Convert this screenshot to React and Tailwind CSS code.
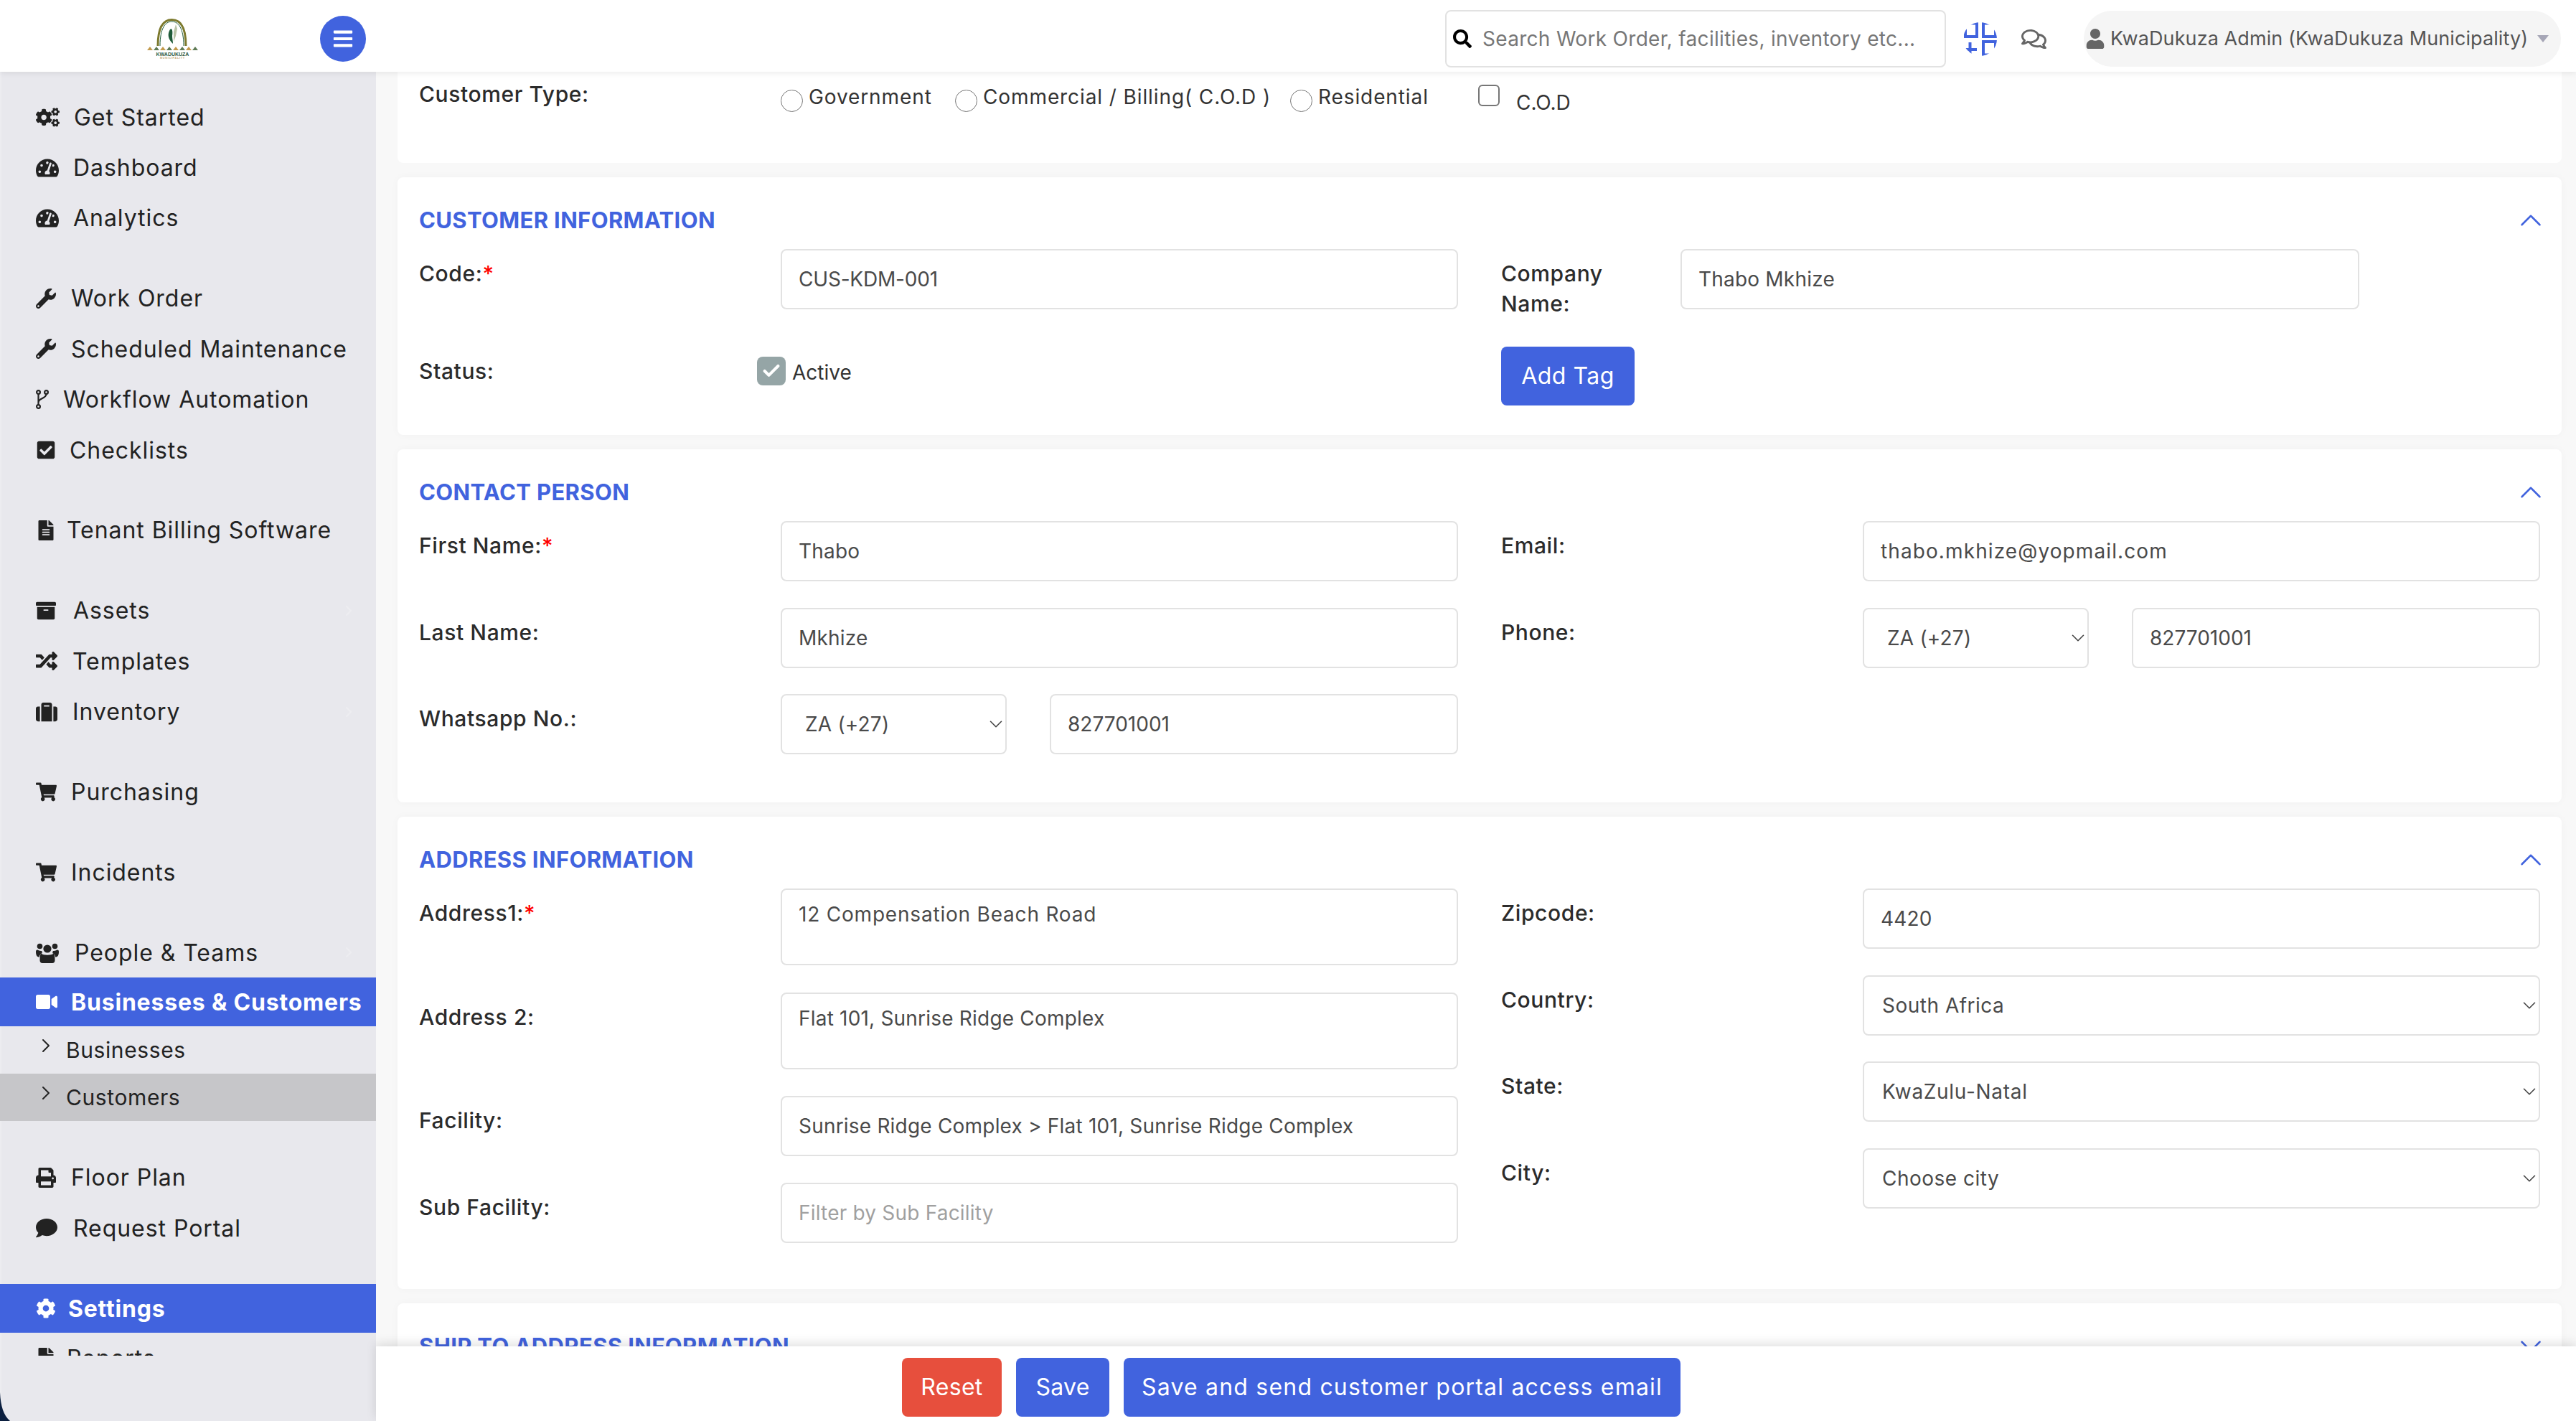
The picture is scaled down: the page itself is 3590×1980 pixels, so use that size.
import React from 'react';
import { Check, ChevronDown, ChevronRight, ChevronUp } from 'lucide-react';
import {
  FaArchive, FaBars, FaCheckSquare, FaCog, FaCogs, FaComment, FaFileAlt, FaPrint, FaRandom,
  FaRegComments, FaSearch, FaShoppingCart, FaSuitcase, FaTachometerAlt, FaUser, FaVideo, FaWrench,
} from 'react-icons/fa';

const Logo = () => (
  <svg viewBox="0 0 73 56" className="w-[73px] h-[56px]">
    <path d="M16 38 C16 12 24 1.5 35.5 1.5 C47 1.5 55 12 55 38" fill="none" stroke="#7d7a2e" strokeWidth="3" />
    <path d="M19 38 C19 14 26 4 35.5 4 C45 4 52 14 52 38" fill="none" stroke="#1f5c3a" strokeWidth="1" />
    <path d="M37 35 C30 28 29 22 33 15 C36 12 37 18 36 24 C36 28 37 31 37 35Z" fill="#1f5c3a" />
    <path d="M38 32 L38 18 L41 8 L43 14 L41 24Z" fill="#b9c4a8" />
    {[1, 10, 19, 28, 37, 46, 55, 64].map((x, i) => (
      <polygon key={x} points={`${x},44 ${x + 4},39 ${x + 8},44`} fill={i % 2 ? '#5d7a55' : '#c29a4c'} />
    ))}
    <text x="36.5" y="52" textAnchor="middle" fontFamily="Liberation Sans, sans-serif" fontWeight="700" fontSize="7" fill="#2d5a44">KWADUKUZA</text>
    <text x="36.5" y="56" textAnchor="middle" fontFamily="Liberation Sans, sans-serif" fontWeight="700" fontSize="3.6" letterSpacing="0.8" fill="#c2a878">MUNICIPALITY</text>
  </svg>
);

const GroupIcon = () => (
  <svg viewBox="0 0 47 47" className="w-[47px] h-[47px]">
    <clipPath id="grp"><circle cx="23.5" cy="23.5" r="23.5" /></clipPath>
    <g clipPath="url(#grp)" fill="none" stroke="#4163de" strokeWidth="4">
      <rect x="3" y="1.5" width="16" height="18.5" />
      <rect x="28" y="1.5" width="17" height="18.5" />
      <rect x="28" y="27" width="17" height="18.5" />
      <path d="M0 38H19M9.5 28V47" />
    </g>
  </svg>
);

// fork icon, the package's one has solid dots
const ForkIcon = () => (
  <svg viewBox="0 0 18 27" className="w-[18px] h-[27px]" fill="none" stroke="currentColor" strokeWidth="2.2">
    <circle cx="3.5" cy="3.5" r="2.4" />
    <circle cx="14.5" cy="3.5" r="2.4" />
    <circle cx="3.5" cy="23.5" r="2.4" />
    <path d="M3.5 6V21M14.5 6C14.5 13 3.5 11 3.5 18" />
  </svg>
);

const UsersIcon = () => (
  <svg viewBox="0 0 32 29" className="w-[32px] h-[29px]" fill="currentColor">
    <circle cx="16" cy="9" r="5.6" />
    <circle cx="5.5" cy="5.5" r="3.8" />
    <circle cx="26.5" cy="5.5" r="3.8" />
    <path d="M7 15.5C11 18.5 21 18.5 25 15.5C26 17 26.5 20 26.5 25C26.5 27.5 25 29 23 29H9C7 29 5.500 27.500 5.500 25C5.500 20 6 17 7 15.500Z" />
    <path d="M0 13C0 10.500 2 10.500 2.500 10.500C4 12 7 12 8.500 12C8 13 8.500 14 9 15C7 15.500 5 17.500 4.800 20.500C1.500 20.500 0 18 0 13Z" />
    <path d="M32 13C32 10.500 30 10.500 29.500 10.500C28 12 25 12 23.500 12C24 13 23.500 14 23 15C25 15.500 27 17.500 27.200 20.500C30.500 20.500 32 18 32 13Z" />
  </svg>
);

const Row = ({ icon: Icon, label, size = 32, w, active, arrow }) => (
  <div className={`flex items-center pl-[50px] ${active ? 'h-[68px] bg-[#4163de] text-white font-bold tracking-[0.8px]' : 'h-[70.4px] text-[#222]'}`}>
    <span className={`flex items-center shrink-0 ${w}`}>
      <Icon size={size} />
    </span>
    <span className="flex-1 whitespace-nowrap pt-[1px]">{label}</span>
    {arrow && <ChevronRight size={24} className="text-[#ededf1] mr-[26px]" />}
  </div>
);

const SubRow = ({ label, active }) => (
  <div className={`flex items-center h-[66px] pl-[48px] text-[30px] tracking-[0.6px] text-[#222] ${active ? 'bg-[#c6c6c9]' : ''}`}>
    <ChevronRight size={32} strokeWidth={1.5} className="-mt-[12px] mr-[12px] shrink-0" />
    {label}
  </div>
);

const Sidebar = () => (
  <aside className="w-[524px] shrink-0 bg-[#e8e8ed] border-l-2 border-[#ececf0]">
    <nav className="h-[1789px] overflow-hidden pt-[28px] -ml-[2px] text-[32px] tracking-[0.95px]">
      <Row icon={FaCogs} label="Get Started" size={33} w="w-[53px]" />
      <Row icon={FaTachometerAlt} label="Dashboard" w="w-[52px]" />
      <Row icon={FaTachometerAlt} label="Analytics" w="w-[52px]" />

      <div className="mt-[41.5px]">
        <Row icon={FaWrench} label="Work Order" size={28} w="w-[49px]" />
        <Row icon={FaWrench} label="Scheduled Maintenance" size={28} w="w-[49px]" />
        <Row icon={ForkIcon} label="Workflow Automation" w="w-[38px]" />
        <Row icon={FaCheckSquare} label="Checklists" size={28} w="w-[47px]" />
      </div>

      <div className="mt-[41.5px]">
        <Row icon={FaFileAlt} label="Tenant Billing Software" size={28} w="w-[43px]" />
      </div>

      <div className="mt-[41.5px]">
        <Row icon={FaArchive} label="Assets" size={28} w="w-[52px]" arrow />
        <Row icon={FaRandom} label="Templates" size={30} w="w-[51px]" />
        <Row icon={FaSuitcase} label="Inventory" size={30} w="w-[51px]" arrow />
      </div>

      <div className="mt-[41.5px]">
        <Row icon={FaShoppingCart} label="Purchasing" size={29} w="w-[49px]" />
      </div>

      <div className="mt-[41.5px]">
        <Row icon={FaShoppingCart} label="Incidents" size={29} w="w-[49px]" />
      </div>

      <div className="mt-[41.5px]">
        <Row icon={UsersIcon} label="People & Teams" w="w-[54px]" arrow />
        <Row icon={FaVideo} label="Businesses & Customers" size={30} w="w-[49px]" active />
        <SubRow label="Businesses" />
        <SubRow label="Customers" active />
      </div>

      <div className="mt-[43px]">
        <Row icon={FaPrint} label="Floor Plan" size={28} w="w-[49px]" />
        <Row icon={FaComment} label="Request Portal" size={30} w="w-[52px]" />
      </div>

      <div className="mt-[43px]">
        <Row icon={FaCog} label="Settings" size={28} w="w-[45px]" active />
        <Row icon={FaFileAlt} label="Reports" size={28} w="w-[43px]" />
      </div>
    </nav>
  </aside>
);

const Label = ({ text, required, className = 'w-[504px]' }) => (
  <label className={`shrink-0 pt-[13px] text-[30px] leading-[42px] font-medium text-[#2b2b2b] tracking-[0.6px] ${className}`}>
    {text}
    {required && <span className="text-[#ff0000]">*</span>}
  </label>
);

const inputClass =
  'w-full h-[84px] px-[23px] border-2 border-[#e2e2e2] rounded-lg bg-white text-[28px] text-[#4a4a4a] tracking-[0.2px] placeholder:text-[#a0a0a0] outline-none';

const Text = ({ value, placeholder, className = '' }) => (
  <input readOnly defaultValue={value} placeholder={placeholder} className={`${inputClass} ${className}`} />
);

const Select = ({ value, wide, className = '' }) => (
  <div className="relative w-full">
    <select defaultValue={value} className={`${inputClass} appearance-none ${wide ? 'pl-[25px]' : 'pl-[32px]'} ${className}`}>
      <option>{value}</option>
    </select>
    <ChevronDown size={30} strokeWidth={1.3} className="absolute right-0 top-[27px] text-[#444]" />
  </div>
);

const Field = ({ label, required, mb = 'mb-[36.5px]', children }) => (
  <div className={`flex ${mb}`}>
    <Label text={label} required={required} />
    <div className="flex-1 min-w-0">{children}</div>
  </div>
);

const Phone = ({ number }) => (
  <div className="flex gap-[60px]">
    <div className="w-[315px] shrink-0"><Select value="ZA (+27)" /></div>
    <Text value={number} className="!tracking-[0px]" />
  </div>
);

const Card = ({ title, open = true, className = '', children }) => (
  <section className={`bg-white rounded-lg shadow-[0_0_12px_rgba(0,0,0,0.03)] px-[30px] ${className}`}>
    <div className="flex items-center justify-between h-[42px] mt-[39px] mb-[19px]">
      <h2 className="text-[31px] font-bold text-[#4163de] uppercase tracking-[0.35px]">{title}</h2>
      {open
        ? <ChevronUp size={50} strokeWidth={1.2} className="text-[#4163de] -mr-[12px]" />
        : <ChevronDown size={50} strokeWidth={1.2} className="text-[#4163de] -mr-[12px]" />}
    </div>
    {children}
  </section>
);

const Radio = ({ label, className = '' }) => (
  <span className={`flex items-center ${className}`}>
    <input type="radio" name="customerType" className="w-[31px] h-[31px] m-0 mt-[10px] shrink-0" />
    <span className="ml-[8px] text-[28px] text-[#333] tracking-[0.9px] whitespace-nowrap">{label}</span>
  </span>
);

const App = () => (
  <div className="relative w-[3590px] h-[1980px] flex flex-col overflow-hidden bg-white font-['Inter',sans-serif]">
    <header className="relative z-20 h-[100px] shrink-0 flex items-center bg-white shadow-[0_2px_8px_rgba(0,0,0,0.08)] pr-[21px] pt-[8px]">
      <div className="ml-[204px]"><Logo /></div>
      <button className="ml-[169px] w-[64px] h-[64px] rounded-full bg-[#4163de] text-white flex items-center justify-center">
        <FaBars size={30} />
      </button>

      <div className="ml-auto w-[698px] h-[80px] flex items-center border-2 border-[#e2e2e2] rounded-lg pl-[9px]">
        <FaSearch size={26} className="text-black shrink-0" />
        <span className="ml-[15px] text-[28px] text-[#777] tracking-[0.3px] whitespace-nowrap">Search Work Order, facilities, inventory etc...</span>
      </div>
      <div className="ml-[24px]"><GroupIcon /></div>
      <FaRegComments size={35} className="ml-[34px] text-[#666]" />
      <div className="ml-[52px] w-[665px] h-[78px] rounded-full bg-[#f5f5f5] flex items-center pl-[2px]">
        <FaUser size={28} className="text-[#666] shrink-0" />
        <span className="ml-[7px] text-[27px] text-[#555] tracking-[0.1px] whitespace-nowrap">KwaDukuza Admin (KwaDukuza Municipality)</span>
        <svg viewBox="0 0 16 10" className="w-[16px] h-[10px] ml-[13px]"><polygon points="0,0 16,0 8,10" fill="#a6a6b6" /></svg>
      </div>
    </header>

    <div className="flex flex-1 min-h-0">
      <Sidebar />

      <main className="flex-1 min-w-0 flex flex-col">
        <div className="flex-1 min-h-0 overflow-hidden bg-[#f8f8f8] pl-[30px] pr-[20px] flex flex-col gap-[20px]">
          <section className="bg-white rounded-b-lg shrink-0 h-[127px] px-[30px] flex">
            <Label text="Customer Type:" className="w-[504px] !pt-[10px]" />
            <div className="flex items-start pt-[14px]">
              <Radio label="Government" className="w-[243px]" />
              <Radio label="Commercial / Billing( C.O.D )" className="w-[467px]" />
              <Radio label="Residential" className="w-[262px]" />
              <input type="checkbox" className="appearance-none w-[30px] h-[30px] m-0 mt-[4px] shrink-0 border-2 border-[#767676] rounded-[6px] bg-white" />
              <span className="ml-[23px] mt-[8px] text-[28px] text-[#333]">C.O.D</span>
            </div>
          </section>

          <Card title="Customer Information" className="shrink-0 h-[359px]">
            <div className="grid grid-cols-2 gap-x-[60px]">
              <div>
                <Field label="Code:" required mb="mb-[52px]"><Text value="CUS-KDM-001" className="!tracking-[-0.2px]" /></Field>
                <div className="flex items-start">
                  <Label text="Status:" className="w-[471px]" />
                  <span className="w-[40px] h-[40px] mt-[14px] shrink-0 rounded-lg bg-[#95a5a6] text-white flex items-center justify-center">
                    <Check size={28} strokeWidth={3.5} />
                  </span>
                  <span className="ml-[9px] mt-[15px] text-[28px] text-[#333]">Active</span>
                </div>
              </div>
              <div>
                <div className="flex mb-[39px]">
                  <Label text="Company Name:" className="w-[250px] pr-[60px]" />
                  <div className="w-[946px]"><Text value="Thabo Mkhize" /></div>
                </div>
                <button className="w-[186px] h-[82px] rounded-lg bg-[#4163de] text-white text-[32px] tracking-[0.5px]">Add Tag</button>
              </div>
            </div>
          </Card>

          <Card title="Contact Person" className="shrink-0 h-[492px]">
            <div className="grid grid-cols-2 gap-x-[60px]">
              <div>
                <Field label="First Name:" required><Text value="Thabo" /></Field>
                <Field label="Last Name:"><Text value="Mkhize" /></Field>
                <Field label="Whatsapp No.:" mb=""><Phone number="827701001" /></Field>
              </div>
              <div>
                <Field label="Email:"><Text value="thabo.mkhize@yopmail.com" className="!tracking-[1.1px]" /></Field>
                <Field label="Phone:" mb=""><Phone number="827701001" /></Field>
              </div>
            </div>
          </Card>

          <Card title="Address Information" className="shrink-0 h-[658px]">
            <div className="grid grid-cols-2 gap-x-[60px]">
              <div>
                <Field label="Address1:" required mb="mb-[38px]">
                  <textarea readOnly defaultValue="12 Compensation Beach Road" className={`${inputClass} !h-[107px] !tracking-[0.8px] pt-[13px] leading-[42px] resize-none block`} />
                </Field>
                <Field label="Address 2:" mb="mb-[37px]">
                  <textarea readOnly defaultValue="Flat 101, Sunrise Ridge Complex" className={`${inputClass} !h-[107px] pt-[13px] leading-[42px] resize-none block`} />
                </Field>
                <Field label="Facility:"><Text value="Sunrise Ridge Complex > Flat 101, Sunrise Ridge Complex" /></Field>
                <Field label="Sub Facility:" mb=""><Text placeholder="Filter by Sub Facility" /></Field>
              </div>
              <div>
                <Field label="Zipcode:"><Text value="4420" /></Field>
                <Field label="Country:"><Select value="South Africa" wide className="!tracking-[0.5px]" /></Field>
                <Field label="State:"><Select value="KwaZulu-Natal" wide className="!tracking-[0.7px]" /></Field>
                <Field label="City:" mb=""><Select value="Choose city" wide className="!tracking-[0.5px]" /></Field>
              </div>
            </div>
          </Card>

          <Card title="Ship To Address Information" open={false} className="shrink-0 h-[200px]" />
        </div>

        <footer className="relative z-10 h-[104px] shrink-0 bg-white shadow-[0_-4px_14px_rgba(0,0,0,0.12)] flex gap-[20px] pl-[733px] pt-[16px] text-[32px] tracking-[0.3px] text-white">
          <button className="w-[139px] h-[82px] rounded-lg bg-[#e74f3d]">Reset</button>
          <button className="w-[130px] h-[82px] rounded-lg bg-[#4163de]">Save</button>
          <button className="w-[776px] h-[82px] rounded-lg bg-[#4163de] tracking-[1.2px]">Save and send customer portal access email</button>
        </footer>
      </main>
    </div>

    {/* window corner showing through at bottom left */}
    <svg viewBox="0 0 14 40" className="absolute left-0 bottom-0 z-30 w-[14px] h-[40px]">
      <path d="M0 0C1 20 5 32 14 40H0Z" fill="#0b1f3f" />
    </svg>
  </div>
);

export default App;
